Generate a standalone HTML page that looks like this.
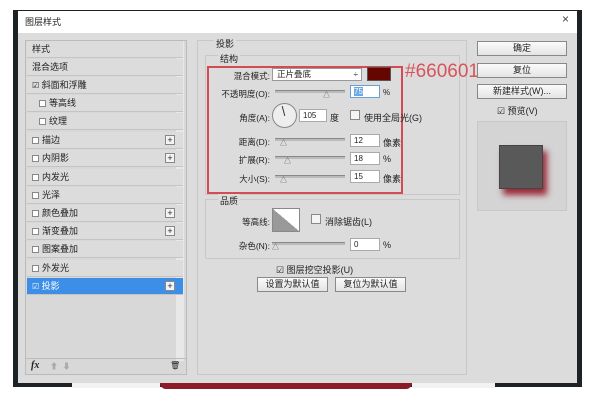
<!DOCTYPE html><html><head><meta charset="utf-8"><style>
*{margin:0;padding:0;box-sizing:border-box}
body{width:600px;height:410px;background:#fff;position:relative;overflow:hidden;font-family:"Liberation Sans","Noto Sans CJK SC",sans-serif;font-size:9px;color:#222}
.a{position:absolute}
.item{position:absolute;left:27px;width:156px;height:17px;background:#dcdcdc;border-bottom:1px solid #c4c4c4;line-height:16px;padding-left:5px;font-size:9px}
.cb{display:inline-block;width:7px;height:7px;border:1px solid #888;background:#fff;margin-right:3px;vertical-align:-1px}
.plus{position:absolute;right:8px;top:3px;width:10px;height:10px;border:1px solid #888;background:#f4f4f4;font-size:9px;line-height:8px;text-align:center}
.btn{position:absolute;background:linear-gradient(#fafafa,#e4e4e4);border:1px solid #888;text-align:center;font-size:9px;line-height:13px}
.inp{position:absolute;background:#fff;border:1px solid #aaa;height:13px;font-size:8px;line-height:11px;padding-left:3px}
.sl{position:absolute;height:3px;background:#bbb;border-top:1px solid #888}
.lbl{position:absolute;font-size:8.5px;text-align:right}
</style></head><body>
<div class="a" style="left:13px;top:10px;width:569px;height:377px;background:#1d2226"></div>
<div class="a" style="left:18px;top:11px;width:559px;height:372px;background:#dcdcdc"></div>
<div class="a" style="left:18px;top:11px;width:559px;height:22px;background:#fff"></div>
<div class="a" style="left:25px;top:15px;font-size:9px">图层样式</div>
<div class="a" style="left:562px;top:12px;font-size:12px;color:#444">×</div>
<div class="a" style="left:160px;top:383px;width:252px;height:6px;background:#8b1a2a;border-radius:0 0 6px 6px"></div>
<div class="a" style="left:72px;top:383px;width:88px;height:5px;background:#f2f2f2"></div>
<div class="a" style="left:412px;top:383px;width:83px;height:5px;background:#f2f2f2"></div>
<!-- left panel -->
<div class="a" style="left:25px;top:40px;width:162px;height:335px;border:1px solid #bbb;background:#d8d8d8"></div>
<div class="a" style="left:176px;top:41px;width:8px;height:320px;background:#e8e8e8"></div>
<div class="item" style="top:41px">样式</div>
<div class="item" style="top:59px">混合选项</div>
<div class="item" style="top:77px"><span style="font-size:8px">☑</span> 斜面和浮雕</div>
<div class="item" style="top:95px;padding-left:12px"><span class="cb"></span>等高线</div>
<div class="item" style="top:113px;padding-left:12px"><span class="cb"></span>纹理</div>
<div class="item" style="top:132px"><span class="cb"></span>描边<span class="plus">+</span></div>
<div class="item" style="top:150px"><span class="cb"></span>内阴影<span class="plus">+</span></div>
<div class="item" style="top:169px"><span class="cb"></span>内发光</div>
<div class="item" style="top:187px"><span class="cb"></span>光泽</div>
<div class="item" style="top:205px"><span class="cb"></span>颜色叠加<span class="plus">+</span></div>
<div class="item" style="top:223px"><span class="cb"></span>渐变叠加<span class="plus">+</span></div>
<div class="item" style="top:241px"><span class="cb"></span>图案叠加</div>
<div class="item" style="top:260px"><span class="cb"></span>外发光</div>
<div class="item" style="top:278px;background:#3d8ee6;color:#fff"><span style="font-size:8px">☑</span> 投影<span class="plus" style="color:#222">+</span></div>
<div class="a" style="left:26px;top:358px;width:160px;height:1px;background:#bbb"></div>
<div class="a" style="left:31px;top:360px;font-style:italic;font-weight:bold;font-family:'Liberation Serif',serif;font-size:10px">fx</div>
<div class="a" style="left:50px;top:361px;color:#aaa;font-size:8px">⬆ &nbsp;⬇</div>
<div class="a" style="left:170px;top:361px;font-size:8px">🗑</div>
<!-- main -->
<div class="a" style="left:197px;top:40px;width:270px;height:335px;border:1px solid #c8c8c8"></div>
<div class="a" style="left:214px;top:37px;background:#dcdcdc;padding:0 2px">投影</div>
<div class="a" style="left:205px;top:55px;width:255px;height:140px;border:1px solid #c8c8c8"></div>
<div class="a" style="left:218px;top:52px;background:#dcdcdc;padding:0 2px">结构</div>
<div class="a" style="left:207px;top:66px;width:196px;height:128px;border:2px solid #d44b55"></div>
<div class="a" style="left:405px;top:61px;color:#d9535a;font-size:19px">#660601</div>
<div class="lbl" style="left:225px;top:70px;width:45px">混合模式:</div>
<div class="a" style="left:272px;top:68px;width:90px;height:13px;background:#fff;border:1px solid #999;font-size:8.5px;line-height:11px;padding-left:4px">正片叠底<span style="float:right;margin-right:3px">÷</span></div>
<div class="a" style="left:367px;top:67px;width:24px;height:14px;background:#660601;border:1px solid #555"></div>
<div class="lbl" style="left:212px;top:88px;width:58px">不透明度(O):</div>
<div class="sl" style="left:275px;top:90px;width:70px"></div>
<div class="a" style="left:323px;top:90px;font-size:7px;color:#555">△</div>
<div class="inp" style="left:350px;top:85px;width:30px;border-color:#6a9fd8"><span style="background:#6aa8e8;color:#fff">75</span></div>
<div class="a" style="left:383px;top:88px;font-size:8px">%</div>
<div class="lbl" style="left:225px;top:112px;width:45px">角度(A):</div>
<div class="a" style="left:272px;top:103px;width:25px;height:25px;border:1px solid #888;border-radius:50%;background:#eee"></div>
<div class="a" style="left:283px;top:106px;width:1px;height:10px;background:#333;transform:rotate(-15deg)"></div>
<div class="inp" style="left:299px;top:109px;width:28px">105</div>
<div class="a" style="left:330px;top:111px">度</div>
<div class="a" style="left:350px;top:110px;width:10px;height:10px;border:1px solid #888;background:#f4f4f4"></div>
<div class="a" style="left:364px;top:111px">使用全局光(G)</div>
<div class="lbl" style="left:225px;top:136px;width:45px">距离(D):</div>
<div class="sl" style="left:275px;top:138px;width:70px"></div><div class="a" style="left:280px;top:138px;font-size:7px;color:#555">△</div>
<div class="inp" style="left:350px;top:134px;width:30px">12</div><div class="a" style="left:383px;top:136px">像素</div>
<div class="lbl" style="left:225px;top:154px;width:45px">扩展(R):</div>
<div class="sl" style="left:275px;top:156px;width:70px"></div><div class="a" style="left:284px;top:156px;font-size:7px;color:#555">△</div>
<div class="inp" style="left:350px;top:152px;width:30px">18</div><div class="a" style="left:383px;top:154px">%</div>
<div class="lbl" style="left:225px;top:173px;width:45px">大小(S):</div>
<div class="sl" style="left:275px;top:175px;width:70px"></div><div class="a" style="left:280px;top:175px;font-size:7px;color:#555">△</div>
<div class="inp" style="left:350px;top:170px;width:30px">15</div><div class="a" style="left:383px;top:172px">像素</div>
<div class="a" style="left:205px;top:199px;width:255px;height:60px;border:1px solid #c8c8c8"></div>
<div class="a" style="left:218px;top:194px;background:#dcdcdc;padding:0 2px">品质</div>
<div class="lbl" style="left:230px;top:216px;width:40px">等高线:</div>
<div class="a" style="left:272px;top:208px;width:28px;height:24px;border:1px solid #888;background:linear-gradient(to top right,#999 50%,#fff 50%)"></div>
<div class="a" style="left:311px;top:214px;width:10px;height:10px;border:1px solid #888;background:#f4f4f4"></div>
<div class="a" style="left:325px;top:215px">消除锯齿(L)</div>
<div class="lbl" style="left:225px;top:240px;width:45px">杂色(N):</div>
<div class="sl" style="left:272px;top:242px;width:73px"></div><div class="a" style="left:272px;top:242px;font-size:7px;color:#555">△</div>
<div class="inp" style="left:350px;top:238px;width:30px">0</div><div class="a" style="left:383px;top:240px">%</div>
<div class="a" style="left:276px;top:263px;font-size:9px">☑ 图层挖空投影(U)</div>
<div class="btn" style="left:257px;top:277px;width:71px">设置为默认值</div>
<div class="btn" style="left:335px;top:277px;width:71px">复位为默认值</div>
<!-- right -->
<div class="btn" style="left:477px;top:41px;width:90px">确定</div>
<div class="btn" style="left:477px;top:63px;width:90px">复位</div>
<div class="btn" style="left:477px;top:84px;width:90px">新建样式(W)...</div>
<div class="a" style="left:497px;top:104px;font-size:9px">☑ 预览(V)</div>
<div class="a" style="left:477px;top:121px;width:90px;height:90px;border:1px solid #c8c8c8;background:#d4d4d4"></div>
<div class="a" style="left:499px;top:145px;width:44px;height:44px;background:#595959;border:1px solid #444;box-shadow:4px 6px 6px #9a2a3a"></div>
</body></html>
